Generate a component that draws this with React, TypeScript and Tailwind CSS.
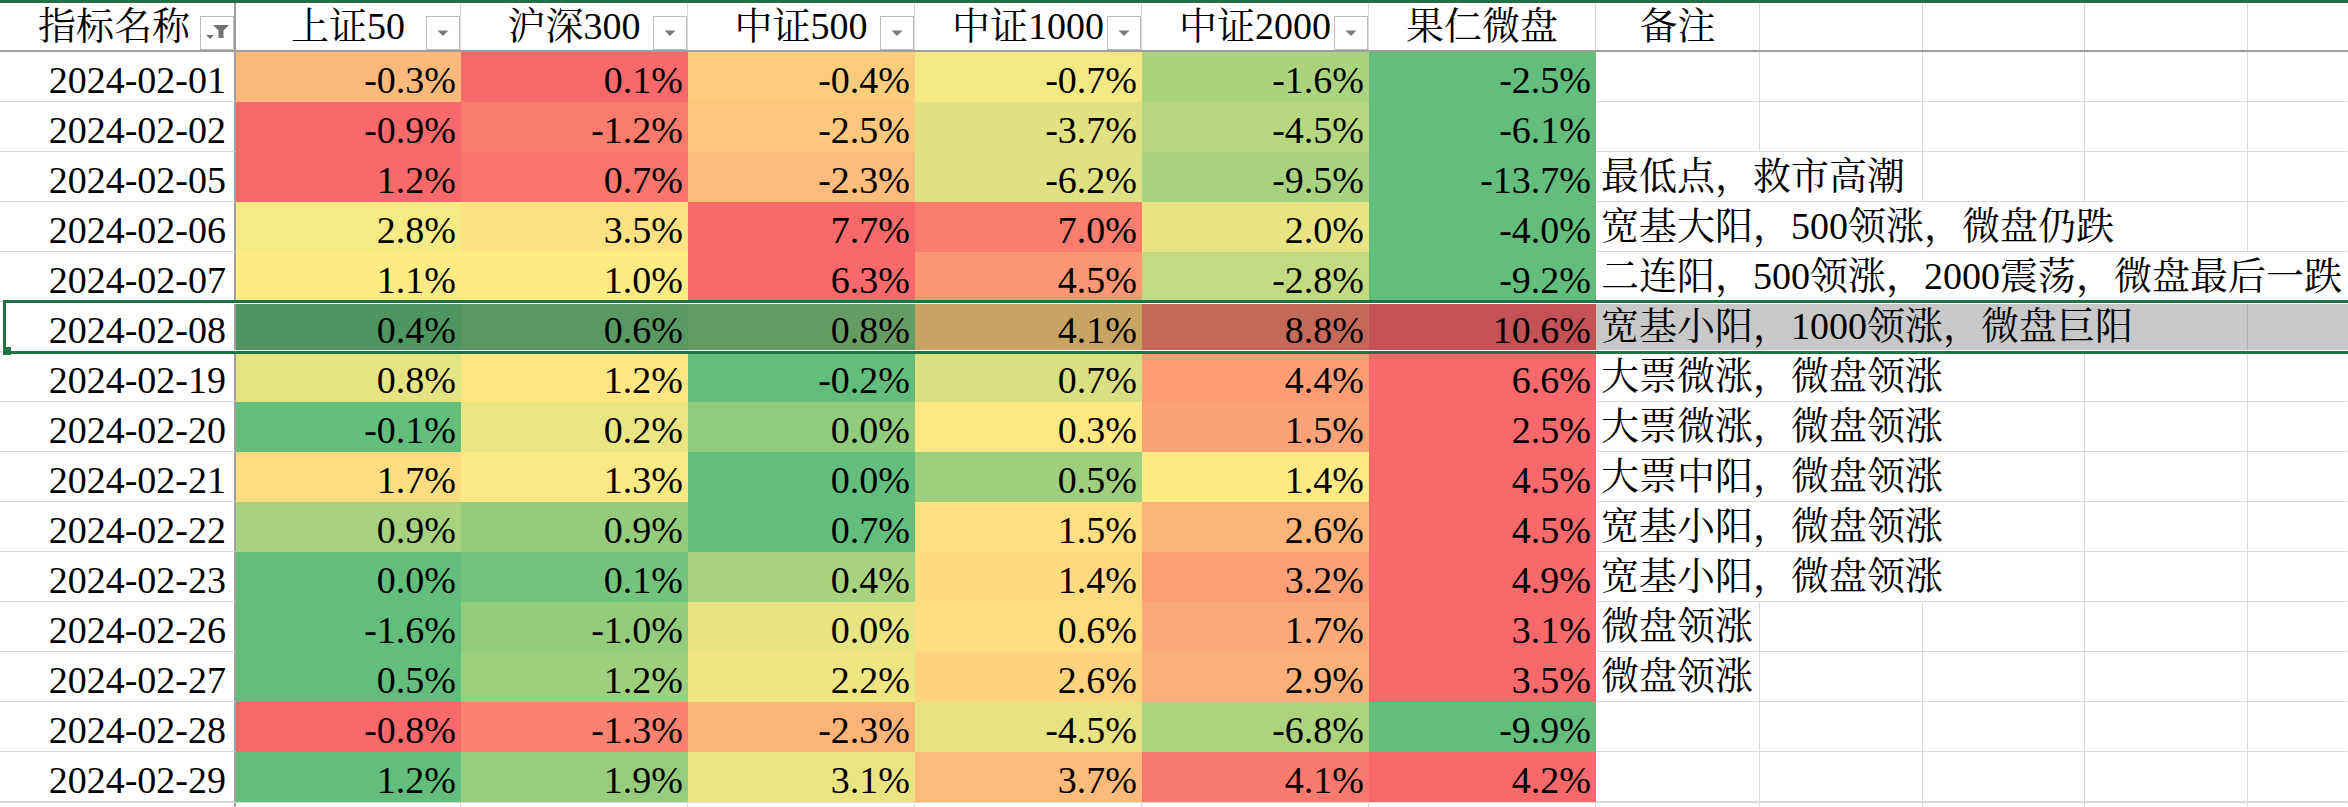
import React from 'react';

type Row = { date: string; vals: number[]; note: string };

// values carry an extra digit where the colour scale needs it
const rows: Row[] = [
  { date: '2024-02-01', vals: [-0.3, 0.1, -0.4, -0.7, -1.6, -2.5], note: '' },
  { date: '2024-02-02', vals: [-0.9, -1.2, -2.5, -3.7, -4.5, -6.1], note: '' },
  { date: '2024-02-05', vals: [1.2, 0.7, -2.3, -6.2, -9.5, -13.7], note: '最低点，救市高潮' },
  { date: '2024-02-06', vals: [2.8, 3.5, 7.7, 7.0, 2.0, -4.0], note: '宽基大阳，500领涨，微盘仍跌' },
  { date: '2024-02-07', vals: [1.1, 1.0, 6.3, 4.5, -2.8, -9.2], note: '二连阳，500领涨，2000震荡，微盘最后一跌' },
  { date: '2024-02-08', vals: [0.4, 0.6, 0.8, 4.1, 8.8, 10.6], note: '宽基小阳，1000领涨，微盘巨阳' },
  { date: '2024-02-19', vals: [0.8, 1.2, -0.2, 0.7, 4.4, 6.6], note: '大票微涨，微盘领涨' },
  { date: '2024-02-20', vals: [-0.1, 0.2, 0.0, 0.3, 1.5, 2.5], note: '大票微涨，微盘领涨' },
  { date: '2024-02-21', vals: [1.7, 1.3, 0.0, 0.5, 1.4, 4.5], note: '大票中阳，微盘领涨' },
  { date: '2024-02-22', vals: [0.92, 0.86, 0.7, 1.5, 2.6, 4.5], note: '宽基小阳，微盘领涨' },
  { date: '2024-02-23', vals: [0.0, 0.1, 0.4, 1.4, 3.2, 4.9], note: '宽基小阳，微盘领涨' },
  { date: '2024-02-26', vals: [-1.6, -1.0, 0.0, 0.6, 1.7, 3.1], note: '微盘领涨' },
  { date: '2024-02-27', vals: [0.5, 1.2, 2.2, 2.6, 2.9, 3.5], note: '微盘领涨' },
  { date: '2024-02-28', vals: [-0.8, -1.3, -2.3, -4.5, -6.8, -9.9], note: '' },
  { date: '2024-02-29', vals: [1.2, 1.9, 3.1, 3.7, 4.1, 4.2], note: '' },
];

const SELECTED = '2024-02-08';

const valueW = ['w-[225px]', 'w-[227px]', 'w-[227px]', 'w-[227px]', 'w-[227px]', 'w-[227px]'];
const extraW = ['w-[164px]', 'w-[163px]', 'w-[162px]', 'w-[163px]', 'w-[100px]'];
const extraRight = [1760, 1923, 2085, 2248, 2348];

const GREEN = [99, 190, 123];
const YELLOW = [255, 235, 132];
const RED = [248, 105, 107];

// Excel 3-colour scale: min green, 50th percentile yellow, max red
function colourScale(vals: number[], dim: boolean) {
  const s = [...vals].sort((a, b) => a - b);
  const min = s[0];
  const max = s[s.length - 1];
  const pos = (s.length - 1) * 0.5;
  const lo = Math.floor(pos);
  const mid = s[lo] + (s[Math.ceil(pos)] - s[lo]) * (pos - lo);
  return vals.map((v) => {
    let a = GREEN;
    let b = YELLOW;
    let t = 1;
    if (v <= mid) {
      t = mid === min ? 1 : (v - min) / (mid - min);
    } else {
      a = YELLOW;
      b = RED;
      t = (v - mid) / (max - mid);
    }
    const c = a.map((x, i) => Math.round((x + (b[i] - x) * t) * (dim ? 0.784 : 1)));
    return `rgb(${c[0]}, ${c[1]}, ${c[2]})`;
  });
}

function textEnd(note: string) {
  let em = 0;
  for (const ch of note) em += /[\x00-\x7f]/.test(ch) ? 0.5 : 1;
  return 1596 + 5 + em * 38;
}

function FilterButton({ active }: { active?: boolean }) {
  return (
    <div className="absolute right-0 bottom-0 w-[34px] h-[34px] border border-[#bdbdbd] bg-white">
      <svg width="32" height="32" viewBox="0 0 32 32">
        {active ? (
          <>
            <path d="M12 8h16l-5.5 5.5V21h-5v-7.5z" fill="#727272" />
            <path d="M5 18h8l-4 4z" fill="#727272" />
          </>
        ) : (
          <path d="M10.5 13.5h11L16 19z" fill="#7b7b7b" />
        )}
      </svg>
    </div>
  );
}

function HeaderRow() {
  const labels = ['上证50', '沪深300', '中证500', '中证1000', '中证2000', '果仁微盘'];
  return (
    <div className="flex h-[52px] border-t-[3px] border-b-2 border-t-[#217346] border-b-[#9e9e9e]">
      <div className="relative shrink-0 w-[236px] h-full border-r-2 border-r-[#9e9e9e] text-center pr-[6px] pt-[1px] leading-[45px]">
        指标名称
        <FilterButton active />
      </div>
      {labels.map((l, i) => (
        <div
          key={l}
          className={`relative shrink-0 ${valueW[i]} h-full border-r border-r-[#dadada] text-center pt-[1px] leading-[45px]`}
        >
          {l}
          {i < 5 && <FilterButton />}
        </div>
      ))}
      {extraW.map((w, i) => (
        <div
          key={i}
          className={`shrink-0 ${w} h-full text-center pt-[1px] leading-[45px] ${i < 4 ? 'border-r border-r-[#dadada]' : ''}`}
        >
          {i === 0 ? '备注' : ''}
        </div>
      ))}
    </div>
  );
}

function DataRow({ row }: { row: Row }) {
  const selected = row.date === SELECTED;
  const colours = colourScale(row.vals, selected);
  const end = row.note ? textEnd(row.note) : 0;

  return (
    <div className="relative flex h-[50px]">
      <div className="shrink-0 w-[236px] h-full bg-white border-r-2 border-r-[#9e9e9e] border-b border-b-[#dadada] text-right pr-[8px] pt-[6px] leading-[44px]">
        {row.date}
      </div>
      {row.vals.map((v, i) => (
        <div
          key={i}
          className={`shrink-0 ${valueW[i]} h-full text-right pr-[5px] pt-[6px] leading-[44px]`}
          style={{ backgroundColor: colours[i] }}
        >
          {v.toFixed(1)}%
        </div>
      ))}
      {extraW.map((w, i) => {
        const covered = end > extraRight[i];
        const line = i === 4 || covered ? 'border-r-transparent' : selected ? 'border-r-[#adadad]' : 'border-r-[#dadada]';
        return (
          <div
            key={i}
            className={`shrink-0 ${w} h-full border-r border-b border-b-[#dadada] ${line} ${selected ? 'bg-[#c8c8c8]' : ''}`}
          >
            {i === 0 && row.note && (
              <span className="relative z-10 block whitespace-nowrap pl-[5px] pt-[2px] leading-[44px]">{row.note}</span>
            )}
          </div>
        );
      })}

      {selected && (
        <div className="absolute -top-[2px] -bottom-[2px] left-[3px] right-0 z-20 border-y-[3px] border-l-[3px] border-[#217346] pointer-events-none">
          <div className="absolute inset-0 border-y border-white" />
          <div className="absolute -left-[3px] -bottom-[4px] w-[8px] h-[8px] bg-[#217346]" />
        </div>
      )}
    </div>
  );
}

export default function App() {
  return (
    <div className="w-[2348px] h-[807px] overflow-hidden bg-white text-black text-[38px] [font-family:Liberation_Serif,Noto_Serif_CJK_SC,Noto_Sans_CJK_SC,serif]">
      <HeaderRow />
      {rows.map((r) => (
        <DataRow key={r.date} row={r} />
      ))}
      <div className="flex h-[5px] border-t border-t-[#dadada]">
        <div className="shrink-0 w-[236px] h-full border-r-2 border-r-[#9e9e9e]" />
        {valueW.map((w, i) => (
          <div key={i} className={`shrink-0 ${w} h-full border-r border-r-[#dadada]`} />
        ))}
        {extraW.map((w, i) => (
          <div key={i} className={`shrink-0 ${w} h-full ${i < 4 ? 'border-r border-r-[#dadada]' : ''}`} />
        ))}
      </div>
    </div>
  );
}
